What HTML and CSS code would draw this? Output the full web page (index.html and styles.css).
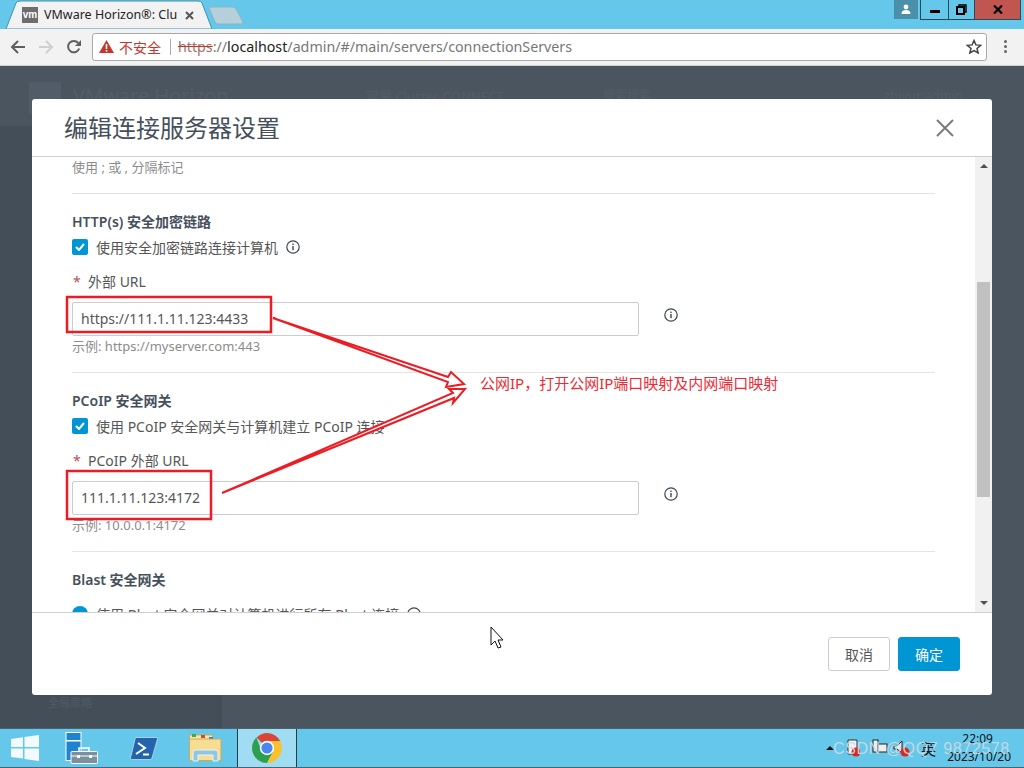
FILE: index.html
```html
<!DOCTYPE html>
<html lang="zh-CN">
<head>
    <meta charset="UTF-8">
    <title>VMware Horizon</title>
    <link rel="stylesheet" href="styles.css">
</head>
<body>
    <div class="screen">
        <div class="tabstrip">
            <svg class="tab-shape" width="250" height="29" viewBox="0 0 250 29">
                <path d="M6 29 L16 3 Q17 1 20 1 L198 1 Q201 1 202 3 L212 29 Z" fill="#f2f2f2" stroke="#3d93ad"/>
                <path d="M209 8 Q209 7 211 7 L233 7 Q235 7 236 9 L243 22 Q243 24 241 24 L218 24 Q216 24 215 22 Z" fill="#b5d0da" stroke="#8fb4c2"/>
            </svg>
            <div class="tab">
                <span class="favicon">vm</span>
                <span class="tab-title">VMware Horizon®: Clu</span>
                <svg class="tab-close" width="9" height="9" viewBox="0 0 9 9"><path d="M1 1 L8 8 M8 1 L1 8" stroke="#555" stroke-width="2"/></svg>
            </div>
            <div class="win-controls">
                <div class="win-user">
                    <svg width="10" height="10" viewBox="0 0 10 10"><circle cx="5" cy="3" r="2.4" fill="#fff"/><path d="M0.5 10 Q0.5 6 5 6 Q9.5 6 9.5 10 Z" fill="#fff"/></svg>
                </div>
                <div class="win-buttons">
                    <div class="win-btn win-min"><span class="min-bar"></span></div>
                    <div class="win-btn win-restore">
                        <svg width="11" height="11" viewBox="0 0 11 11"><path d="M3 2.5 V1 H10 V8 H8.5" fill="none" stroke="#000" stroke-width="1.4"/><rect x="1" y="3" width="7" height="7" fill="none" stroke="#000" stroke-width="2"/></svg>
                    </div>
                    <div class="win-btn win-close">
                        <svg width="10" height="9" viewBox="0 0 10 9"><path d="M1 0.5 L9 8.5 M9 0.5 L1 8.5" stroke="#000" stroke-width="2.2"/></svg>
                    </div>
                </div>
            </div>
        </div>

        <div class="toolbar">
            <svg class="nav-icon" width="16" height="14" viewBox="0 0 16 14"><path d="M15 7 H2 M8 1 L2 7 L8 13" fill="none" stroke="#5f5f5f" stroke-width="2"/></svg>
            <svg class="nav-icon" width="16" height="14" viewBox="0 0 16 14"><path d="M1 7 H14 M8 1 L14 7 L8 13" fill="none" stroke="#cfcfcf" stroke-width="2"/></svg>
            <svg class="nav-icon" width="16" height="16" viewBox="0 0 16 16"><path d="M13.2 9.5 A5.7 5.7 0 1 1 12.2 4" fill="none" stroke="#5f5f5f" stroke-width="2"/><path d="M15 1 V7 H9 Z" fill="#5f5f5f"/></svg>
            <div class="omnibox">
                <svg class="warn-icon" width="15" height="13" viewBox="0 0 15 13"><path d="M7.5 0 L15 13 H0 Z" fill="#c5352a"/><rect x="6.7" y="4" width="1.6" height="5" fill="#fff"/><rect x="6.7" y="10" width="1.6" height="1.6" fill="#fff"/></svg>
                <span class="not-secure">不安全</span>
                <span class="omni-sep"></span>
                <span class="url"><span class="url-scheme">https</span>://<span class="url-host">localhost</span>/admin/#/main/servers/connectionServers</span>
                <svg class="star-icon" width="16" height="15" viewBox="0 0 16 15"><path d="M8 1.5 L9.9 5.9 L14.7 6.3 L11 9.4 L12.2 14 L8 11.5 L3.8 14 L5 9.4 L1.3 6.3 L6.1 5.9 Z" fill="none" stroke="#444" stroke-width="1.5"/></svg>
            </div>
            <div class="kebab"><i></i><i></i><i></i></div>
        </div>

        <div class="page">
            <div class="ghost-header">
                <span class="ghost-logo"></span>
                <span class="ghost-brand">VMware Horizon</span>
                <span class="ghost-nav">容量 Cluster-CONNECT</span>
                <span class="ghost-search">搜索搜索</span>
                <span class="ghost-user">zhiyunadmin</span>
            </div>
            <div class="ghost-main">
                <div class="ghost-sidebar"><span class="ghost-item">全局策略</span></div>
            </div>

            <div class="modal">
                <div class="modal-header">
                    <h1>编辑连接服务器设置</h1>
                    <svg width="18" height="18" viewBox="0 0 18 18"><path d="M1 1 L17 17 M17 1 L1 17" stroke="#7b7b7b" stroke-width="2"/></svg>
                </div>
                <div class="modal-body">
                    <div class="scroll-content">
                        <p class="hint hint-top">使用 ; 或 , 分隔标记</p>
                        <section class="section">
                            <h2>HTTP(s) 安全加密链路</h2>
                            <div class="check-row">
                                <span class="checkbox"><svg width="10" height="8" viewBox="0 0 10 8"><path d="M1 4 L4 7 L9 1" fill="none" stroke="#fff" stroke-width="2"/></svg></span>
                                <span>使用安全加密链路连接计算机</span>
                                <svg class="info" width="14" height="14" viewBox="0 0 14 14"><circle cx="7" cy="7" r="6.2" fill="none" stroke="#3c4650" stroke-width="1.2"/><rect x="6.3" y="6" width="1.4" height="4.2" fill="#3c4650"/><rect x="6.3" y="3.6" width="1.4" height="1.4" fill="#3c4650"/></svg>
                            </div>
                            <label class="field-label"><span class="req">*</span>外部 URL</label>
                            <div class="input-row">
                                <div class="text-input">https://111.1.11.123:4433</div>
                                <svg class="info" width="14" height="14" viewBox="0 0 14 14"><circle cx="7" cy="7" r="6.2" fill="none" stroke="#3c4650" stroke-width="1.2"/><rect x="6.3" y="6" width="1.4" height="4.2" fill="#3c4650"/><rect x="6.3" y="3.6" width="1.4" height="1.4" fill="#3c4650"/></svg>
                            </div>
                            <p class="hint">示例: https://myserver.com:443</p>
                        </section>
                        <section class="section">
                            <h2>PCoIP 安全网关</h2>
                            <div class="check-row">
                                <span class="checkbox"><svg width="10" height="8" viewBox="0 0 10 8"><path d="M1 4 L4 7 L9 1" fill="none" stroke="#fff" stroke-width="2"/></svg></span>
                                <span>使用 PCoIP 安全网关与计算机建立 PCoIP 连接</span>
                            </div>
                            <label class="field-label"><span class="req">*</span>PCoIP 外部 URL</label>
                            <div class="input-row">
                                <div class="text-input">111.1.11.123:4172</div>
                                <svg class="info" width="14" height="14" viewBox="0 0 14 14"><circle cx="7" cy="7" r="6.2" fill="none" stroke="#3c4650" stroke-width="1.2"/><rect x="6.3" y="6" width="1.4" height="4.2" fill="#3c4650"/><rect x="6.3" y="3.6" width="1.4" height="1.4" fill="#3c4650"/></svg>
                            </div>
                            <p class="hint">示例: 10.0.0.1:4172</p>
                        </section>
                        <section class="section">
                            <h2>Blast 安全网关</h2>
                            <div class="check-row radio-row">
                                <span class="radio"></span>
                                <span>使用 Blast 安全网关对计算机进行所有 Blast 连接</span>
                                <svg class="info" width="14" height="14" viewBox="0 0 14 14"><circle cx="7" cy="7" r="6.2" fill="none" stroke="#3c4650" stroke-width="1.2"/></svg>
                            </div>
                        </section>
                    </div>
                    <div class="scrollbar">
                        <span class="arrow-up"></span>
                        <span class="thumb"></span>
                        <span class="arrow-down"></span>
                    </div>
                </div>
                <div class="modal-footer">
                    <button class="btn">取消</button>
                    <button class="btn btn-primary">确定</button>
                </div>
            </div>
        </div>

        <div class="taskbar">
            <svg class="task-icon icon-start" width="28" height="26" viewBox="0 0 28 26">
                <path d="M0 4 L12 2.3 V12 H0 Z M13.5 2 L28 0 V12 H13.5 Z M0 13.5 H12 V23.5 L0 22 Z M13.5 13.5 H28 V26 L13.5 24 Z" fill="#f2fafd"/>
            </svg>
            <svg class="task-icon icon-server" width="33" height="32" viewBox="0 0 33 32">
                <rect x="1" y="0.5" width="15" height="28" fill="#1f84d0" stroke="#fff"/>
                <rect x="1" y="8" width="15" height="1.5" fill="#fff"/>
                <rect x="6" y="19.5" width="26.5" height="12" rx="1" fill="#7b909f" stroke="#fff"/>
                <path d="M14 19 V16 H24 V19" fill="none" stroke="#fff" stroke-width="1.5"/>
                <path d="M6 24 H32" stroke="#fff"/>
                <rect x="12" y="23" width="3" height="3" fill="#fff"/>
                <rect x="24" y="23" width="3" height="3" fill="#fff"/>
            </svg>
            <svg class="task-icon icon-ps" width="28" height="23" viewBox="0 0 28 23">
                <path d="M6 0.5 H27 Q28 0.5 27.5 2 L22 21 Q21.5 22.5 20 22.5 H1.5 Q0.2 22.5 0.5 21 L5 2 Q5.3 0.5 6 0.5 Z" fill="#2464ad" stroke="#a8cfe6"/>
                <path d="M8 6 L15 11 L6 17" fill="none" stroke="#fff" stroke-width="2"/>
                <path d="M13 17.5 H19" stroke="#fff" stroke-width="2"/>
            </svg>
            <svg class="task-icon icon-folder" width="33" height="28" viewBox="0 0 33 28">
                <rect x="0.5" y="1" width="23" height="6" fill="#f6e7ae" stroke="#c9a95c"/>
                <rect x="3" y="0" width="4" height="3" fill="#3fa83f"/>
                <rect x="12" y="1" width="4" height="3" fill="#d9482c"/>
                <rect x="20" y="3" width="4" height="3" fill="#2e7fd1"/>
                <path d="M0.5 5 H32 V26.5 H0.5 Z" fill="#f7dd92" stroke="#c9a95c"/>
                <path d="M4 27 V19 Q4 16 7 16 H26 Q29 16 29 19 V27 H24 V21 H9 V27 Z" fill="#8fc6e0" stroke="#e8f4fa"/>
            </svg>
            <div class="task-active">
                <svg width="30" height="30" viewBox="0 0 30 30">
                    <path d="M15 15 L4.6 4.4 A15 15 0 0 1 28.4 8.2 L15 8.2 Z" fill="#db4437"/>
                    <path d="M4.4 4.4 A15 15 0 0 0 15 30 L21 19 L9.5 18 Z" fill="#2e9e4f"/>
                    <path d="M28.2 8 A15 15 0 0 1 15 30 L21.5 18 L15 8 Z" fill="#fbc02d"/>
                    <circle cx="15" cy="15" r="7.2" fill="#fff"/>
                    <circle cx="15" cy="15" r="5.6" fill="#4b86ee"/>
                </svg>
            </div>
            <div class="tray">
                <span class="tray-arrow"></span>
                <svg class="tray-flag" width="14" height="18" viewBox="0 0 14 18"><path d="M2 1 H11 V15 H2 Z" fill="#f2f2f2" stroke="#333"/><circle cx="10" cy="13" r="4.5" fill="#d9271c"/></svg>
                <svg class="tray-net" width="16" height="18" viewBox="0 0 16 18"><rect x="1" y="1" width="5" height="12" fill="#eee" stroke="#222"/><rect x="6" y="5" width="9" height="8" fill="#eee" stroke="#222"/></svg>
                <svg class="tray-sound" width="17" height="18" viewBox="0 0 17 18"><path d="M1 7 H4 L9 2 V14 L4 10 H1 Z" fill="#eee" stroke="#222"/><circle cx="12" cy="13" r="4.5" fill="#d9271c"/></svg>
                <span class="tray-ime">英</span>
                <div class="clock">
                    <span>22:09</span>
                    <span>2023/10/20</span>
                </div>
            </div>
        </div>

        <svg class="annotations" width="1024" height="768" viewBox="0 0 1024 768">
            <rect x="67" y="297" width="204" height="35" fill="none" stroke="#ed1c24" stroke-width="2.5"/>
            <rect x="67" y="471" width="144" height="48" fill="none" stroke="#ed1c24" stroke-width="2.5"/>
            <path d="M273 318 L448 377 L451 372 L464 384 L446 387 L448 382 Z" fill="#fff" stroke="#ed1c24" stroke-width="2"/>
            <path d="M222 493 L453 393 L449 389 L465 389 L453 403 L454 398 Z" fill="#fff" stroke="#ed1c24" stroke-width="2"/>
            <path d="M491 627 V645 L495 641 L498 648 L501 647 L498 640 L503 640 Z" fill="#fff" stroke="#111"/>
        </svg>
        <span class="note">公网IP，打开公网IP端口映射及内网端口映射</span>
        <span class="watermark">CSDN @QQ7 9872578</span>
    </div>
</body>
</html>
```

FILE: styles.css
```css
* {
    box-sizing: border-box;
}

body {
    margin: 0;
    font-family: "Noto Sans", "Noto Sans CJK SC", sans-serif;
    color: #565656;
}

.screen {
    position: relative;
    width: 1024px;
    height: 768px;
    overflow: hidden;
    display: flex;
    flex-direction: column;
}

/* browser chrome */
.tabstrip {
    position: relative;
    height: 29px;
    background-color: #65c8eb;
    display: flex;
    justify-content: space-between;
}

.tab-shape {
    position: absolute;
    left: 0;
    top: 0;
}

.tab {
    position: relative;
    width: 200px;
    padding: 7px 0 0 22px;
    display: flex;
    align-items: flex-start;
    font-size: 12.5px;
    color: #222;
}

.favicon {
    width: 16px;
    height: 16px;
    margin-right: 6px;
    background-color: #6d6d6d;
    color: #fff;
    font: bold 10px/15px "Liberation Sans", sans-serif;
    text-align: center;
}

.tab-title {
    width: 132px;
    line-height: 16px;
    white-space: nowrap;
}

.tab-close {
    margin: 4px 0 0 9px;
}

.win-controls {
    position: relative;
    display: flex;
    gap: 2px;
    margin-right: 3px;
    height: 20px;
}

.win-user {
    width: 24px;
    height: 19px;
    background-color: #4b90ab;
    display: flex;
    justify-content: center;
    padding-top: 4px;
}

.win-buttons {
    display: flex;
    border: 1px solid #2a4a5a;
    border-top: none;
}

.win-btn {
    display: flex;
    align-items: center;
    justify-content: center;
    height: 19px;
}

.win-min {
    width: 28px;
    border-right: 1px solid #2a4a5a;
}

.min-bar {
    width: 10px;
    height: 3px;
    margin-top: 4px;
    background-color: #000;
}

.win-restore {
    width: 26px;
    border-right: 1px solid #2a4a5a;
}

.win-close {
    width: 45px;
    background-color: #c0564f;
}

.toolbar {
    height: 37px;
    background-color: #f2f2f2;
    border-bottom: 1px solid #d2d2d2;
    display: flex;
    align-items: center;
    padding: 0 0 1px 10px;
    gap: 12px;
}

.nav-icon {
    flex: none;
}

.omnibox {
    width: 895px;
    height: 28px;
    margin-left: -2px;
    background-color: #fff;
    border: 1px solid #a9a9a9;
    border-radius: 3px;
    display: flex;
    align-items: center;
    padding: 0 4px 0 6px;
    font-size: 14px;
}

.warn-icon {
    flex: none;
}

.not-secure {
    margin-left: 5px;
    color: #c5352a;
}

.omni-sep {
    width: 1px;
    height: 16px;
    margin: 0 7px 0 9px;
    background-color: #aaa;
}

.url {
    flex: 1;
    font-size: 14.25px;
    color: #777;
    white-space: nowrap;
}

.url-scheme {
    color: #a4716b;
    text-decoration: line-through;
    text-decoration-color: #c5352a;
}

.url-host {
    color: #222;
}

.kebab {
    display: flex;
    flex-direction: column;
    gap: 2px;
    margin-left: 5px;
}

.kebab i {
    width: 3px;
    height: 3px;
    background-color: #666;
    border-radius: 50%;
}

/* dimmed page behind the dialog */
.page {
    position: relative;
    flex: 1;
    background-color: #4b5560;
    display: flex;
    flex-direction: column;
}

.ghost-header {
    height: 60px;
    display: flex;
    align-items: center;
    padding: 0 0 2px 29px;
    color: #535d69;
}

.ghost-logo {
    width: 32px;
    height: 32px;
    margin: 6px 12px 0 0;
    background-color: #525c68;
}

.ghost-brand {
    width: 293px;
    font-size: 20px;
}

.ghost-nav {
    width: 237px;
    font-size: 13px;
}

.ghost-search {
    width: 281px;
    font-size: 12px;
}

.ghost-user {
    font-size: 13px;
}

.ghost-main {
    flex: 1;
}

.ghost-sidebar {
    width: 222px;
    height: 100%;
    background-color: #444e59;
    display: flex;
    align-items: flex-end;
    padding: 0 0 18px 48px;
}

.ghost-item {
    color: #505a66;
    font-size: 11px;
}

/* dialog */
.modal {
    position: absolute;
    left: 32px;
    top: 33px;
    width: 960px;
    height: 596px;
    background-color: #fff;
    border-radius: 3px;
    display: flex;
    flex-direction: column;
}

.modal-header {
    height: 58px;
    border-bottom: 1px solid #cfcfcf;
    display: flex;
    align-items: center;
    justify-content: space-between;
    padding: 0 38px 0 32px;
}

.modal-header h1 {
    margin: 0 0 3px;
    font-size: 24px;
    font-weight: 400;
    color: #46505c;
}

.modal-body {
    height: 456px;
    display: flex;
    overflow: hidden;
    border-bottom: 1px solid #cfcfcf;
}

.scroll-content {
    flex: 1;
    overflow: hidden;
    padding: 2px 40px 0;
}

.hint {
    margin: 1px 0 0;
    height: 18px;
    line-height: 18px;
    font-size: 13px;
    color: #8c8c8c;
    white-space: nowrap;
}

.hint-top {
    height: 16px;
    line-height: 16px;
    margin: 0 0 18px;
}

.section {
    border-top: 1px solid #e4e4e4;
    padding-top: 18px;
    padding-bottom: 17px;
}

.section h2 {
    margin: 0;
    height: 20px;
    font-size: 14px;
    line-height: 20px;
    font-weight: 600;
    color: #46505c;
}

.check-row {
    height: 18px;
    margin-top: 6px;
    display: flex;
    align-items: center;
    gap: 8px;
    font-size: 14px;
    color: #565656;
    white-space: nowrap;
}

.radio-row {
    margin-top: 15px;
}

.checkbox {
    width: 16px;
    height: 16px;
    background-color: #0095d3;
    border-radius: 2px;
    display: flex;
    align-items: center;
    justify-content: center;
}

.radio {
    width: 16px;
    height: 16px;
    background-color: #0095d3;
    border-radius: 50%;
}

.field-label {
    display: block;
    height: 20px;
    margin-top: 16px;
    font-size: 14px;
    line-height: 20px;
    color: #565656;
}

.req {
    display: inline-block;
    width: 16px;
    padding-left: 1px;
    color: #b5505a;
}

.input-row {
    display: flex;
    align-items: center;
    gap: 25px;
    margin-top: 10px;
}

.text-input {
    width: 567px;
    height: 34px;
    border: 1px solid #ccc;
    border-radius: 2px;
    padding-left: 8px;
    font-size: 14px;
    line-height: 32px;
    color: #565656;
}

.input-row .info {
    margin-top: -8px;
}

.scrollbar {
    width: 17px;
    background-color: #f1f1f1;
    position: relative;
}

.thumb {
    position: absolute;
    left: 2px;
    top: 125px;
    width: 13px;
    height: 215px;
    background-color: #c1c1c1;
}

.arrow-up,
.arrow-down {
    position: absolute;
    left: 5px;
    width: 0;
    height: 0;
    border-left: 4px solid transparent;
    border-right: 4px solid transparent;
}

.arrow-up {
    top: 7px;
    border-bottom: 4px solid #505050;
}

.arrow-down {
    bottom: 7px;
    border-top: 4px solid #505050;
}

.modal-footer {
    flex: 1;
    display: flex;
    justify-content: flex-end;
    align-items: flex-start;
    gap: 8px;
    padding: 24px 32px 0 0;
}

.btn {
    width: 62px;
    height: 34px;
    background-color: #fff;
    border: 1px solid #ccc;
    border-radius: 3px;
    font-family: inherit;
    font-size: 14px;
    color: #565656;
}

.btn-primary {
    background-color: #0095d3;
    border-color: #0095d3;
    color: #fff;
}

/* taskbar */
.taskbar {
    height: 40px;
    background-color: #65c8eb;
    border-top: 1px solid #4b6470;
    border-bottom: 1px solid #4b6470;
    display: flex;
    align-items: center;
    position: relative;
}

.task-icon {
    flex: none;
}

.icon-start {
    margin-left: 11px;
}

.icon-server {
    margin-left: 26px;
}

.icon-ps {
    margin-left: 32px;
}

.icon-folder {
    margin-left: 31px;
}

.task-active {
    width: 60px;
    height: 100%;
    margin-left: 15px;
    background-color: #a0dcf2;
    border-left: 1px solid #2a3b45;
    border-right: 1px solid #2a3b45;
    display: flex;
    align-items: center;
    justify-content: center;
}

.tray {
    margin-left: auto;
    display: flex;
    align-items: center;
    font-size: 12px;
    color: #111;
}

.tray-arrow {
    width: 0;
    height: 0;
    margin-right: 12px;
    border-left: 4px solid transparent;
    border-right: 4px solid transparent;
    border-bottom: 4px solid #111;
}

.tray-flag {
    margin-right: 12px;
}

.tray-net {
    margin-right: 5px;
}

.tray-sound {
    margin-right: 11px;
}

.tray-ime {
    width: 18px;
    margin-right: 6px;
    font-size: 15px;
}

.clock {
    width: 79px;
    padding-right: 13px;
    display: flex;
    flex-direction: column;
    align-items: flex-end;
    line-height: 18px;
}

.clock span:first-child {
    margin-right: 18px;
}

/* things pasted over the screenshot */
.annotations {
    position: absolute;
    left: 0;
    top: 0;
    pointer-events: none;
}

.note {
    position: absolute;
    left: 480px;
    top: 373px;
    font-size: 15px;
    line-height: 20px;
    color: #ee2a35;
    white-space: nowrap;
}

.watermark {
    position: absolute;
    left: 833px;
    top: 738px;
    font-family: "Liberation Sans", sans-serif;
    font-size: 16px;
    line-height: 22px;
    letter-spacing: 0.6px;
    color: rgba(205, 218, 226, 0.92);
    white-space: nowrap;
}
```
